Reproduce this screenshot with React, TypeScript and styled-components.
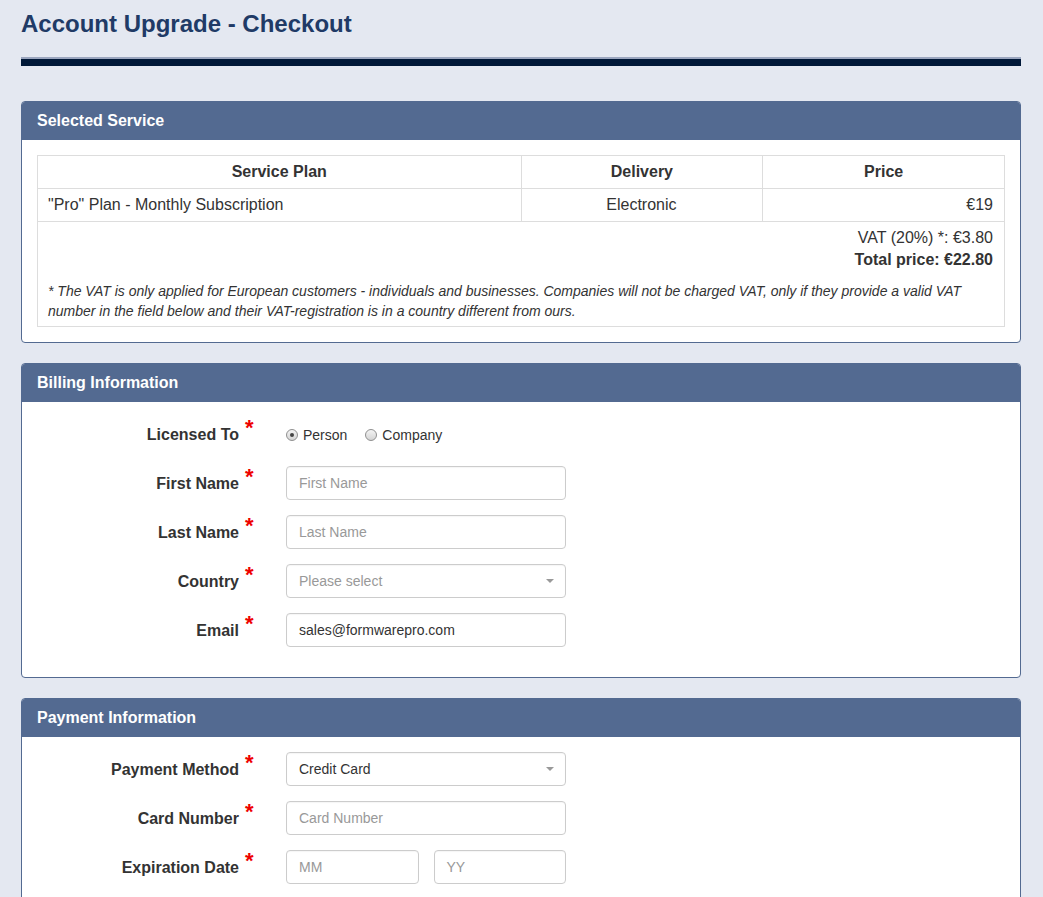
import React from 'react';
import styled, { createGlobalStyle } from 'styled-components';

const GlobalStyle = createGlobalStyle`
  html, body {
    margin: 0;
    padding: 0;
    background: #e4e8f1;
  }
  body {
    font-family: 'Liberation Sans', Arial, sans-serif;
    color: #333;
  }
  * {
    box-sizing: border-box;
  }
`;

const Page = styled.div`
  padding: 0 22px 40px 21px;
`;

const Title = styled.h1`
  margin: 0;
  padding-top: 10px;
  height: 57px;
  font-size: 24px;
  font-weight: bold;
  color: #203a66;
  line-height: 28px;
`;

const TitleRule = styled.div`
  height: 9px;
  border-top: 2px solid #9ba6bf;
  background: #001838;
  margin-bottom: 35px;
`;

const Panel = styled.section`
  background: #fff;
  border: 1px solid #536a91;
  border-radius: 4px;
  margin-bottom: 20px;
  overflow: hidden;
`;

const PanelHeader = styled.h2`
  margin: 0;
  height: 38px;
  padding: 0 15px;
  display: flex;
  align-items: center;
  background: #536a91;
  color: #fff;
  font-size: 16px;
  font-weight: bold;
`;

const PanelBody = styled.div`
  padding: 15px;
`;

const Table = styled.table`
  width: 100%;
  border-collapse: collapse;
  font-size: 16px;
`;

const Th = styled.th`
  border: 1px solid #ddd;
  height: 33px;
  padding: 0 10px;
  font-weight: bold;
  text-align: center;
`;

const Td = styled.td<{ $align?: string }>`
  border: 1px solid #ddd;
  height: 33px;
  padding: 0 11px 0 10px;
  text-align: ${p => p.$align || 'left'};
`;

const SummaryCell = styled.td`
  border: 1px solid #ddd;
  padding: 5px 11px 5px 10px;
`;

const Totals = styled.div`
  text-align: right;
  line-height: 22px;
`;

const TotalLine = styled.div`
  font-weight: bold;
`;

const Note = styled.p`
  margin: 10px 0 0;
  font-size: 14px;
  font-style: italic;
  line-height: 20px;
`;

const Form = styled.div`
  display: flex;
  flex-direction: column;
  gap: 15px;
  padding: 0 0 15px;
`;

const Row = styled.div`
  display: grid;
  grid-template-columns: 234px 280px;
  column-gap: 15px;
  height: 34px;
`;

const Label = styled.label`
  display: flex;
  justify-content: flex-end;
  align-items: flex-start;
  padding-top: 8px;
  padding-right: 16px;
  font-weight: bold;
  font-size: 16px;
  line-height: 20px;
`;

const Star = styled.span`
  color: #ee0000;
  font-size: 22px;
  line-height: 16px;
  margin-left: 6px;
  margin-top: -5px;
  width: 10px;
`;

const Input = styled.div<{ $placeholder?: boolean }>`
  height: 34px;
  border: 1px solid #ccc;
  border-radius: 4px;
  padding: 0 12px;
  display: flex;
  align-items: center;
  font-size: 14px;
  color: ${p => (p.$placeholder ? '#999' : '#333')};
  background: #fff;
  box-shadow: inset 0 1px 1px rgba(0, 0, 0, 0.04);
`;

const Select = styled(Input)`
  justify-content: space-between;
  padding-right: 11px;
`;

const Caret = styled.span`
  width: 0;
  height: 0;
  border-left: 4px solid transparent;
  border-right: 4px solid transparent;
  border-top: 4px solid #999;
`;

const Pair = styled.div`
  display: grid;
  grid-template-columns: 1fr 1fr;
  gap: 15px;
`;

const Radios = styled.div`
  display: flex;
  align-items: center;
  gap: 18px;
  font-size: 14px;
  padding-top: 1px;
`;

const RadioOption = styled.span`
  display: flex;
  align-items: center;
  gap: 5px;
`;

const RadioDot = styled.span<{ $checked?: boolean }>`
  width: 12px;
  height: 12px;
  border-radius: 50%;
  border: 1px solid #8f8f8f;
  background: linear-gradient(#f4f4f4, #d4d4d4);
  display: inline-flex;
  align-items: center;
  justify-content: center;
  &::after {
    content: '';
    width: 4px;
    height: 4px;
    border-radius: 50%;
    background: ${p => (p.$checked ? '#444' : 'transparent')};
  }
`;

const Field: React.FC<{ label: string; children: React.ReactNode }> = ({ label, children }) => (
  <Row>
    <Label>
      {label}
      <Star>*</Star>
    </Label>
    {children}
  </Row>
);

const App: React.FC = () => {
  return (
    <Page>
      <GlobalStyle />
      <Title>Account Upgrade - Checkout</Title>
      <TitleRule />

      <Panel>
        <PanelHeader>Selected Service</PanelHeader>
        <PanelBody>
          <Table>
            <thead>
              <tr>
                <Th style={{ width: '50%' }}>Service Plan</Th>
                <Th style={{ width: '25%' }}>Delivery</Th>
                <Th style={{ width: '25%' }}>Price</Th>
              </tr>
            </thead>
            <tbody>
              <tr>
                <Td>"Pro" Plan - Monthly Subscription</Td>
                <Td $align="center">Electronic</Td>
                <Td $align="right">€19</Td>
              </tr>
              <tr>
                <SummaryCell colSpan={3}>
                  <Totals>
                    <div>VAT (20%) *: €3.80</div>
                    <TotalLine>Total price: €22.80</TotalLine>
                  </Totals>
                  <Note>
                    * The VAT is only applied for European customers - individuals and businesses. Companies will not be
                    charged VAT, only if they provide a valid VAT number in the field below and their VAT-registration is
                    in a country different from ours.
                  </Note>
                </SummaryCell>
              </tr>
            </tbody>
          </Table>
        </PanelBody>
      </Panel>

      <Panel>
        <PanelHeader>Billing Information</PanelHeader>
        <PanelBody>
          <Form>
            <Field label="Licensed To">
              <Radios>
                <RadioOption>
                  <RadioDot $checked />
                  Person
                </RadioOption>
                <RadioOption>
                  <RadioDot />
                  Company
                </RadioOption>
              </Radios>
            </Field>
            <Field label="First Name">
              <Input $placeholder>First Name</Input>
            </Field>
            <Field label="Last Name">
              <Input $placeholder>Last Name</Input>
            </Field>
            <Field label="Country">
              <Select $placeholder>
                Please select
                <Caret />
              </Select>
            </Field>
            <Field label="Email">
              <Input>sales@formwarepro.com</Input>
            </Field>
          </Form>
        </PanelBody>
      </Panel>

      <Panel>
        <PanelHeader>Payment Information</PanelHeader>
        <PanelBody>
          <Form>
            <Field label="Payment Method">
              <Select>
                Credit Card
                <Caret />
              </Select>
            </Field>
            <Field label="Card Number">
              <Input $placeholder>Card Number</Input>
            </Field>
            <Field label="Expiration Date">
              <Pair>
                <Input $placeholder>MM</Input>
                <Input $placeholder>YY</Input>
              </Pair>
            </Field>
          </Form>
        </PanelBody>
      </Panel>
    </Page>
  );
};

export default App;
